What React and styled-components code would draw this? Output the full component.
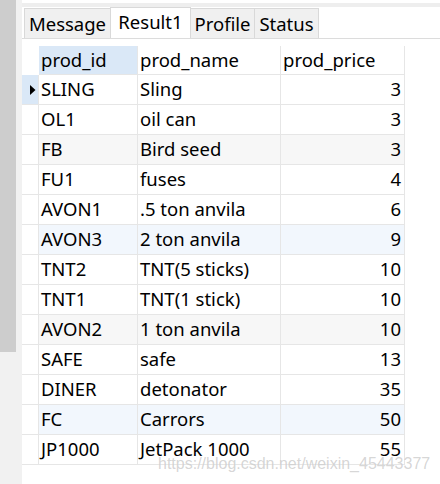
import React from 'react';
import styled, { createGlobalStyle } from 'styled-components';

const GlobalStyle = createGlobalStyle`
    html, body {
        margin: 0;
        padding: 0;
        background: #f0f0f0;
    }
`;

const Page = styled.div`
    position: relative;
    display: flex;
    width: 440px;
    height: 484px;
    overflow: hidden;
    background: #f1f1f1;
    font-family: "Noto Sans", "Open Sans", sans-serif;
    color: #000;
`;

const Gutter = styled.div`
    width: 22px;
    flex-shrink: 0;
    display: flex;
    align-items: flex-start;
`;

const GutterBar = styled.div`
    width: 16px;
    height: 352px;
    background: #cdcdcd;
`;

const Main = styled.div`
    flex: 1;
    display: flex;
    flex-direction: column;
    background: #fff;
`;

const TopBand = styled.div`
    margin-top: 3px;
    height: 4px;
    background: #eeeeee;
`;

const TabStrip = styled.div`
    height: 31px;
    display: flex;
    align-items: flex-end;
    padding-left: 2px;
    border-bottom: 1px solid #dcdcdc;
`;

const Tab = styled.div`
    box-sizing: border-box;
    width: ${p => p.w}px;
    height: ${p => (p.active ? 31 : 30)}px;
    margin-left: -1px;
    &:first-child { margin-left: 0; }
    border: 1px solid #d9d9d9;
    border-bottom: none;
    background: ${p => (p.active ? '#fff' : '#f0f0f0')};
    display: flex;
    justify-content: center;
    align-items: center;
    padding-bottom: ${p => (p.active ? 2 : 0)}px;
    font-size: 18.5px;
    line-height: 20px;
    position: relative;
    z-index: ${p => (p.active ? 1 : 0)};
`;

const Grid = styled.div`
    padding-top: 7px;
    display: flex;
    flex-direction: column;
`;

const Row = styled.div`
    display: grid;
    grid-template-columns: 17px 99px 143px 124px;
    height: ${p => (p.head ? 29 : 30)}px;
`;

const toneColors = {
    plain: '#fff',
    gray: '#f7f7f7',
    blue: '#f2f7fd',
};

const Cell = styled.div`
    box-sizing: border-box;
    border-right: 1px solid #e6e6e6;
    border-bottom: 1px solid #e6e6e6;
    background: ${p => (p.sel ? '#dae8f7' : toneColors[p.tone || 'plain'])};
    padding: 0 3px 0 2px;
    font-size: 18.5px;
    line-height: 28px;
    white-space: nowrap;
    overflow: hidden;
    text-align: ${p => (p.right ? 'right' : 'left')};
`;

const HeadCorner = styled.div`
    background: #fff;
`;

const Indicator = styled.div`
    box-sizing: border-box;
    border-right: 1px solid #e6e6e6;
    border-bottom: 1px solid #e6e6e6;
    background: ${p => (p.current ? '#dae8f7' : '#fff')};
    display: flex;
    align-items: center;
    justify-content: flex-end;
    padding-right: 2px;
`;

const Watermark = styled.div`
    position: absolute;
    left: 158px;
    top: 455px;
    font-family: "Liberation Sans", Arial, sans-serif;
    font-size: 16px;
    line-height: 18px;
    color: rgba(150, 150, 150, 0.4);
    text-shadow: 0 0 1px rgba(255, 255, 255, 0.8);
    white-space: nowrap;
    pointer-events: none;
`;

const products = [
    { id: 'SLING', name: 'Sling', price: 3 },
    { id: 'OL1', name: 'oil can', price: 3 },
    { id: 'FB', name: 'Bird seed', price: 3 },
    { id: 'FU1', name: 'fuses', price: 4 },
    { id: 'AVON1', name: '.5 ton anvila', price: 6 },
    { id: 'AVON3', name: '2 ton anvila', price: 9 },
    { id: 'TNT2', name: 'TNT(5 sticks)', price: 10 },
    { id: 'TNT1', name: 'TNT(1 stick)', price: 10 },
    { id: 'AVON2', name: '1 ton anvila', price: 10 },
    { id: 'SAFE', name: 'safe', price: 13 },
    { id: 'DINER', name: 'detonator', price: 35 },
    { id: 'FC', name: 'Carrors', price: 50 },
    { id: 'JP1000', name: 'JetPack 1000', price: 55 },
];

// every third row is tinted, alternating gray / blue
function rowTone(i) {
    if (i % 3 !== 2) return 'plain';
    return i % 6 === 2 ? 'gray' : 'blue';
}

function Arrow() {
    return (
        <svg width="6" height="10" viewBox="0 0 6 10">
            <path d="M0 0 L5.5 5 L0 10 Z" fill="#000" />
        </svg>
    );
}

export default function App() {
    return (
        <Page>
            <GlobalStyle />
            <Gutter>
                <GutterBar />
            </Gutter>
            <Main>
                <TopBand />
                <TabStrip>
                    <Tab w={87}>Message</Tab>
                    <Tab w={81} active>Result1</Tab>
                    <Tab w={65}>Profile</Tab>
                    <Tab w={65}>Status</Tab>
                </TabStrip>
                <Grid>
                    <Row head>
                        <HeadCorner />
                        <Cell sel>prod_id</Cell>
                        <Cell>prod_name</Cell>
                        <Cell>prod_price</Cell>
                    </Row>
                    {products.map((p, i) => (
                        <Row key={p.id}>
                            <Indicator current={i === 0}>{i === 0 && <Arrow />}</Indicator>
                            <Cell tone={rowTone(i)}>{p.id}</Cell>
                            <Cell tone={rowTone(i)}>{p.name}</Cell>
                            <Cell tone={rowTone(i)} right>{p.price}</Cell>
                        </Row>
                    ))}
                </Grid>
            </Main>
            <Watermark>https://blog.csdn.net/weixin_45443377</Watermark>
        </Page>
    );
}
